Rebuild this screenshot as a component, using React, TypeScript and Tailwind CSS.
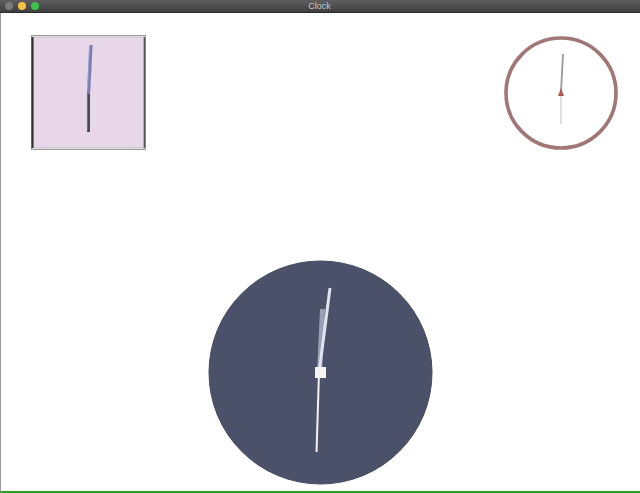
import React from 'react';

const TitleBar = () => (
	<div className="relative flex h-[13px] items-center bg-gradient-to-b from-[#5e5e5e] to-[#3f3f3f] border-b border-[#2a2a2a]">
		<div className="flex items-center gap-[5px] pl-[5px]">
			<span className="h-[8px] w-[8px] rounded-full bg-[#7a7a7a]" />
			<span className="h-[8px] w-[8px] rounded-full bg-[#f6c343]" />
			<span className="h-[8px] w-[8px] rounded-full bg-[#3fc24c]" />
		</div>
		<div className="flex-1 text-center pr-[40px] text-[9px] leading-none text-[#c9c9c9] font-['Liberation_Sans',sans-serif]">
			Clock
		</div>
	</div>
);

// square face, pink
const SquareClock = () => (
	<svg width="115" height="115" viewBox="0 0 115 115">
		<rect x="0.5" y="0.5" width="114" height="114" fill="#fff" stroke="#9a9a9a" />
		<rect x="2" y="2" width="111" height="111" fill="#e8d7e8" stroke="#bdbdbd" strokeWidth="1" />
		<line x1="1.5" y1="2" x2="1.5" y2="113" stroke="#2e2e2e" strokeWidth="2" />
		<line x1="113.5" y1="2" x2="113.5" y2="113" stroke="#555" strokeWidth="1.5" />
		<line x1="60" y1="10" x2="57.5" y2="59" stroke="#7a7db3" strokeWidth="3.2" />
		<line x1="58.5" y1="10" x2="56.5" y2="55" stroke="#a3a6d6" strokeWidth="0.8" />
		<line x1="57.5" y1="59" x2="57.5" y2="97" stroke="#464b55" strokeWidth="3" />
		<line x1="56" y1="59" x2="56" y2="96" stroke="#c8c8cc" strokeWidth="0.6" />
	</svg>
);

// round face with a brown ring
const RingClock = () => (
	<svg width="116" height="116" viewBox="0 0 116 116">
		<circle cx="58" cy="57" r="55" fill="#fff" stroke="#a07677" strokeWidth="3.6" />
		<line x1="60" y1="18" x2="58" y2="56" stroke="#9a9aa2" strokeWidth="1.8" />
		<line x1="58" y1="56" x2="58" y2="88" stroke="#d3d3d6" strokeWidth="1.4" />
		<polygon points="55,60 58,52 61,60" fill="#b0584f" />
	</svg>
);

// big dark face
const BigClock = () => (
	<svg width="226" height="226" viewBox="0 0 226 226">
		<circle cx="112.5" cy="112.5" r="111.5" fill="#4b5169" stroke="#444a60" strokeWidth="1" />
		<polygon points="112,49 117,49 114,113 109,113" fill="#9aa0b4" />
		<line x1="122" y1="28" x2="111" y2="113" stroke="#dfe3f2" strokeWidth="3" />
		<line x1="111" y1="113" x2="108.5" y2="192" stroke="#f2f2f2" strokeWidth="2" />
		<rect x="107" y="107" width="11" height="11" fill="#f4f4f4" />
	</svg>
);

const App = () => {
	return (
		<div className="flex h-[493px] w-[640px] flex-col overflow-hidden bg-white">
			<TitleBar />
			<div className="flex flex-1 flex-col border-l border-[#9a9a9a] border-b-2 border-b-[#22a322]">
				<div className="flex items-start justify-between pl-[30px] pr-[21px] pt-[22px]">
					<SquareClock />
					<div className="mt-[1px]">
						<RingClock />
					</div>
				</div>
				<div className="flex justify-center pt-[108px]">
					<BigClock />
				</div>
			</div>
		</div>
	);
};

export default App;
